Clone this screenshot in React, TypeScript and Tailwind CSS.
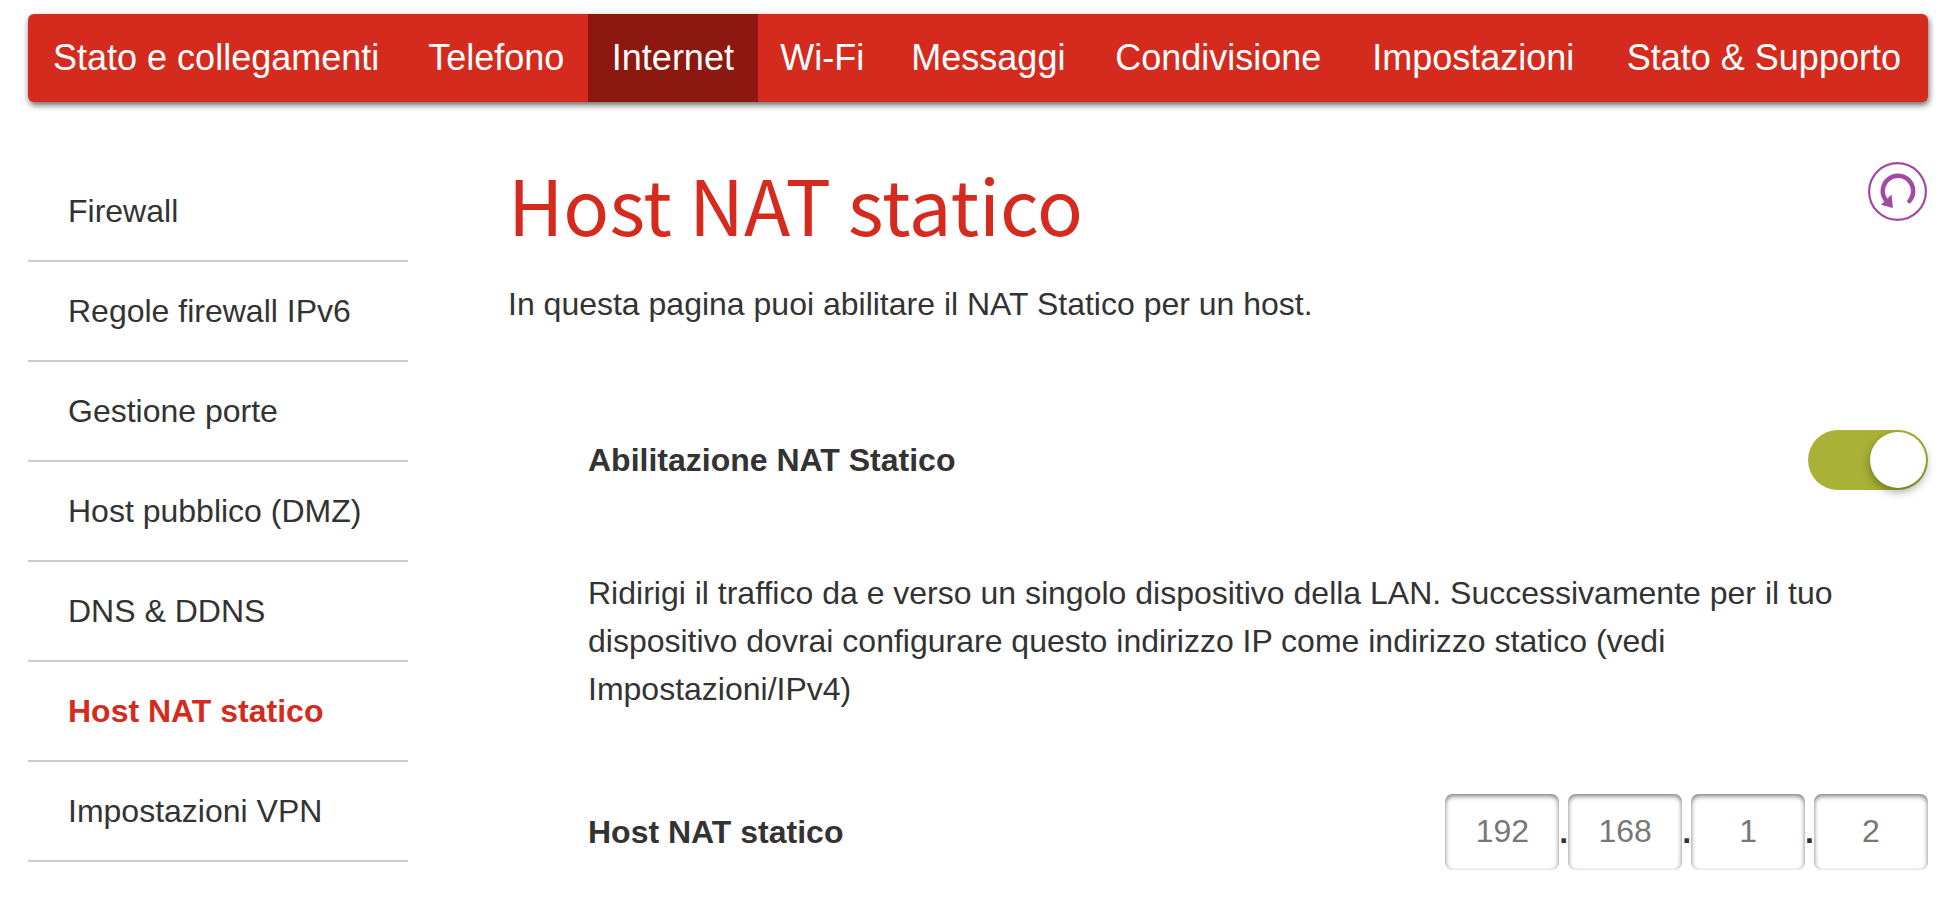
import { Fragment, useState } from "react";

const tabs = [
  "Stato e collegamenti",
  "Telefono",
  "Internet",
  "Wi-Fi",
  "Messaggi",
  "Condivisione",
  "Impostazioni",
  "Stato & Supporto",
];

const sections = [
  "Firewall",
  "Regole firewall IPv6",
  "Gestione porte",
  "Host pubblico (DMZ)",
  "DNS & DDNS",
  "Host NAT statico",
  "Impostazioni VPN",
];

function TopNav() {
  return (
    <nav className="rounded-md bg-[#d52b1e] shadow-[1px_3px_6px_rgba(0,0,0,0.6)]">
      <ul className="table w-full [&>li:first-child>a]:px-[17px]">
        {tabs.map((tab) => (
          <li
            key={tab}
            className={
              tab === "Internet"
                ? "table-cell bg-[#8c1810] text-center"
                : "table-cell text-center"
            }
          >
            <a
              href="#"
              aria-current={tab === "Internet" ? "page" : undefined}
              className="block px-5 py-5 text-4xl leading-[48px] whitespace-nowrap text-white"
            >
              {tab}
            </a>
          </li>
        ))}
      </ul>
    </nav>
  );
}

function SideNav() {
  return (
    <aside className="w-[380px] shrink-0">
      <ul>
        {sections.map((section) => (
          <li key={section} className="border-b-2 border-[#cccccc]">
            <a
              href="#"
              className={
                section === "Host NAT statico"
                  ? "block px-10 py-[25px] font-bold text-[#d52b1e]"
                  : "block px-10 py-[25px]"
              }
            >
              {section}
            </a>
          </li>
        ))}
      </ul>
    </aside>
  );
}

function ResetIcon() {
  return (
    <svg viewBox="0 0 60 60" className="size-[60px]" fill="none" aria-hidden="true">
      <circle cx="29.5" cy="29.5" r="28.4" stroke="#a349a3" strokeWidth="2.2" />
      <path
        d="M41.4 39A15.2 15.2 0 1 0 17.4 37.6"
        stroke="#a349a3"
        strokeWidth="4.5"
        strokeLinecap="round"
      />
      <path d="M13 42.8L24.9 46L23.5 32.5Z" fill="#a349a3" />
    </svg>
  );
}

function Toggle({ id }: { id: string }) {
  const [on, setOn] = useState(true);
  return (
    <input
      id={id}
      type="checkbox"
      role="switch"
      checked={on}
      onChange={() => setOn(!on)}
      className="flex h-[60px] w-[120px] shrink-0 cursor-pointer appearance-none rounded-full bg-[#bbbbbb] p-0.5 before:size-14 before:rounded-full before:bg-white before:shadow-[0_4px_10px_rgba(0,0,0,0.35)] checked:justify-end checked:bg-[#a9b136]"
    />
  );
}

function AddressFields() {
  return (
    <div role="group" aria-labelledby="host-label" className="flex items-center">
      {["192", "168", "1", "2"].map((octet, i) => (
        <Fragment key={i}>
          {i > 0 && <span className="font-bold">.</span>}
          <input
            type="text"
            inputMode="numeric"
            aria-label={`Host NAT statico ${i + 1}`}
            defaultValue={octet}
            className="h-[76px] w-[114px] rounded-lg bg-white pb-0.5 text-center text-[#777777] shadow-[inset_0_2px_5px_rgba(0,0,0,0.55)]"
          />
        </Fragment>
      ))}
    </div>
  );
}

export default function App() {
  return (
    <div className="bg-white pt-3.5 pr-[30px] pl-7 font-['Liberation_Sans',Arial,sans-serif] text-[32px] leading-[48px] text-[#333333]">
      <TopNav />
      <div className="mt-[60px] flex gap-[100px]">
        <SideNav />
        <main className="min-w-0 flex-1">
          <header className="flex items-start justify-between">
            <h1 className="font-['Noto_Sans_CJK_SC',sans-serif] text-[76px] leading-[82px] text-[#d52b1e]">
              Host NAT statico
            </h1>
            <button type="button" aria-label="Ripristina" className="cursor-pointer">
              <ResetIcon />
            </button>
          </header>
          <p className="mt-9">In questa pagina puoi abilitare il NAT Statico per un host.</p>
          <section className="mt-[102px] pl-20">
            <div className="flex items-center justify-between">
              <label htmlFor="nat-toggle" className="font-bold">
                Abilitazione NAT Statico
              </label>
              <Toggle id="nat-toggle" />
            </div>
            <p className="mt-[79px] pr-20">
              Ridirigi il traffico da e verso un singolo dispositivo della LAN. Successivamente per
              il tuo dispositivo dovrai configurare questo indirizzo IP come indirizzo statico (vedi
              Impostazioni/IPv4)
            </p>
            <div className="mt-[81px] flex items-center justify-between">
              <span id="host-label" className="font-bold">
                Host NAT statico
              </span>
              <AddressFields />
            </div>
          </section>
        </main>
      </div>
    </div>
  );
}
